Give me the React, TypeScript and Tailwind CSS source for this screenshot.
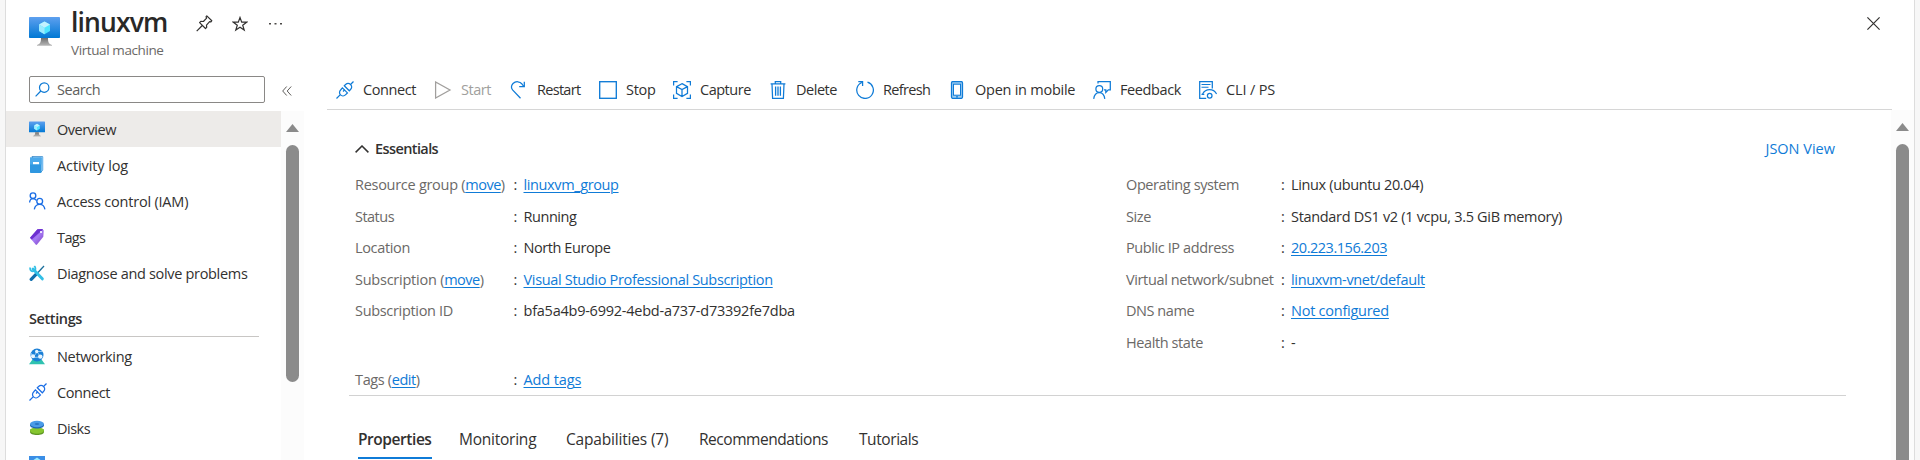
import type { ReactNode } from 'react';

type IconProps = { className?: string };

/* ---------- Icons ---------- */

const VmIcon = ({ className }: IconProps) => (
  <svg viewBox="0 0 31 29" className={className}>
    <defs>
      <linearGradient id="vmScreen" x1="0" y1="0" x2="0" y2="1">
        <stop offset="0" stopColor="#5ea0ef" />
        <stop offset="1" stopColor="#0078d4" />
      </linearGradient>
      <linearGradient id="vmStand" x1="0" y1="0" x2="0" y2="1">
        <stop offset="0" stopColor="#707070" />
        <stop offset="1" stopColor="#b8b8b8" />
      </linearGradient>
    </defs>
    <rect width="31" height="21" rx="0.8" fill="url(#vmScreen)" />
    <path d="M12 21h7c0 4 .8 6 4 7v.8H8V28c3.200-1 4-3 4-7z" fill="url(#vmStand)" />
    <path d="M15.500 4.500l5.500 3v6.500l-5.500 3.200-5.500-3.200V7.500z" fill="#50e6ff" />
    <path d="M15.500 4.500l5.500 3-5.500 3.200-5.500-3.200z" fill="#c3f1ff" />
    <path d="M10 7.500l5.500 3.200v6.500L10 14z" fill="#9cebff" />
  </svg>
);

const PinIcon = () => (
  <svg width="17" height="17" viewBox="0 0 17 17" fill="none" stroke="#323130" strokeWidth="1.200" strokeLinejoin="round">
    <path d="M10.800.9l5 4.800-.7 1.100-1.500-.1-3.100 3.400.2 2.300-1.200 1.100-5.900-5.900L4.800 6.300l2.600.2 3.200-3.300-.5-1.500z" />
    <path d="M6.300 10.500L.7 16.200" />
  </svg>
);

const StarIcon = () => (
  <svg width="16" height="16" viewBox="0 0 16 16" fill="none" stroke="#323130" strokeWidth="1.200">
    <path d="M8 1.500l1.700 4.700h4.900l-3.900 3 1.500 4.900L8 11.200l-4.200 2.900 1.500-4.900-3.900-3h4.900z" />
  </svg>
);

const SearchIcon = () => (
  <svg width="15" height="15" viewBox="0 0 15 15" fill="none" stroke="#0a78d4" strokeWidth="1.200">
    <circle cx="9.200" cy="5.600" r="4.700" />
    <path d="M5.800 9L.6 14.300" />
  </svg>
);

const CollapseIcon = () => (
  <svg width="10" height="10" viewBox="0 0 10 10" fill="none" stroke="#605e5c" strokeWidth="1">
    <path d="M4.700.5L.7 5l4 4.500M9.200.5l-4 4.500 4 4.500" />
  </svg>
);

const BookIcon = () => (
  <svg width="16" height="18" viewBox="0 0 16 18">
    <path d="M3 .6h10.500v13.800L12 16z" fill="#fff" stroke="#1d74bd" strokeWidth=".8" />
    <path d="M12.500 1.500v14l1.800-1.500V.8H3.500z" fill="#76bcf0" />
    <rect x="1" y="1.500" width="11.500" height="15.500" rx=".8" fill="#2f97e0" />
    <path d="M1 1.500h11.500v7H1z" fill="#4ba9eb" />
    <rect x="4" y="6" width="6" height="2.200" fill="#fff" />
  </svg>
);

const PeopleIcon = () => (
  <svg width="17" height="18" viewBox="0 0 17 18" fill="none" stroke="#1b6ee5" strokeWidth="1.350">
    <circle cx="4" cy="3.700" r="2.800" />
    <circle cx="10.700" cy="9.300" r="2.900" />
    <path d="M.6 10.500C.8 8 2 6.600 4 6.600c1.500 0 2.600.7 3.400 1.900M5.300 17.300c.6-3.200 2.600-5 5.400-5s4.700 1.800 5.200 5" />
  </svg>
);

const TagIcon = () => (
  <svg width="16" height="18" viewBox="0 0 16 18">
    <defs>
      <linearGradient id="tagFill" x1="0" y1="0" x2="1" y2="1">
        <stop offset="0" stopColor="#7a35dc" />
        <stop offset="0.500" stopColor="#a67af4" />
        <stop offset="1" stopColor="#7b3fc0" />
      </linearGradient>
    </defs>
    <path d="M8.500 1.300L13.300 1l1.400 1.500-.4 6.200-6.700 8.200-1-.3L1 9.800z" fill="url(#tagFill)" />
    <path d="M8.500 1.300L13.300 1l.6.700L2.600 11.600 1 9.800z" fill="#6d2fd0" />
    <circle cx="12" cy="4" r="1.100" fill="#fff" />
  </svg>
);

const ToolsIcon = () => (
  <svg width="16" height="16" viewBox="0 0 16 16" fill="none">
    <path d="M15 1L8.500 8" stroke="#1b6f9c" strokeWidth="1.300" />
    <path d="M7.500 8.800l-5.300 5.600" stroke="#0f6fae" strokeWidth="3.200" strokeLinecap="round" />
    <path d="M4 4l9.300 9.800" stroke="#32bfe6" strokeWidth="3" strokeLinecap="round" />
    <path d="M1.300 2.400c-.6 2 .3 3.900 2.500 4 2.100 0 3.200-2 2.400-4.200L5.300.9" stroke="#32bfe6" strokeWidth="1.700" />
  </svg>
);

const GlobeIcon = () => (
  <svg width="16" height="17" viewBox="0 0 16 17">
    <path d="M3.500 11.500h9l3.500 4.700H0z" fill="#2fc2b0" />
    <circle cx="8" cy="7" r="6.500" fill="#1b7fd6" />
    <path d="M8 3.700L4.200 9.500 11.600 9zM8 3.700l5-.3M4.200 9.500L2 5" stroke="#9fd0f5" strokeWidth=".9" fill="none" />
    <circle cx="7.700" cy="3.500" r="1.700" fill="#e6f4ff" />
    <circle cx="4" cy="8.300" r="2" fill="#e6f4ff" />
    <circle cx="11.300" cy="8.600" r="2.200" fill="#e6f4ff" />
  </svg>
);

const PlugIcon = ({ color }: { color: string }) => (
  <svg width="18" height="18" viewBox="0 0 18 18" fill="none" stroke={color} strokeWidth="1.250">
    <path d="M.5 17.500l3.600-3.600M17.500.5l-3.200 3.200" />
    <path d="M6.400 6.900l5 5-1.700 1.700c-1.600 1.600-3.800 1.700-5.200.3s-1.300-3.600.3-5.200z" />
    <path d="M8.300 4.800l5 5 1.200-1.300c1.600-1.600 1.500-3.500.1-4.900s-3.400-1.600-5-.1z" />
    <path d="M7 10.500l1.700-1.700" />
  </svg>
);

const DisksIcon = () => (
  <svg width="16" height="16" viewBox="0 0 16 16">
    <path d="M1 9.500v2.300C1 13.900 4 15 8 15s7-1.100 7-3.200V9.500z" fill="#5e9624" />
    <ellipse cx="8" cy="10.500" rx="7" ry="3.200" fill="#86c62f" />
    <path d="M1 4v1.200c0 2 3 3.200 7 3.200s7-1.200 7-3.200V4z" fill="#1f66b5" />
    <ellipse cx="8" cy="4" rx="7" ry="3.200" fill="#4a9be8" />
    <ellipse cx="8" cy="4" rx="2.300" ry=".7" fill="#1f66b5" />
  </svg>
);

const SizeIcon = () => (
  <svg width="16" height="16" viewBox="0 0 16 16">
    <rect width="16" height="11" fill="#3a8ee6" />
    <path d="M8 1.500L11.500 4v4L8 10 4.500 8V4z" fill="#9cebff" />
    <path d="M5.500 15h5l-1-4h-3z" fill="#999" />
  </svg>
);

const Line = ({ children, color = '#0f7bd7' }: { children: ReactNode; color?: string }) => (
  <svg width="18" height="18" viewBox="0 0 18 18" fill="none" stroke={color} strokeWidth="1.250">
    {children}
  </svg>
);

const StartIcon = () => (
  <Line color="#a19f9d">
    <path d="M1.600 1v16L16 9z" />
  </Line>
);
const RestartIcon = () => (
  <Line>
    <path d="M10.500 17.300L2.800 9.200C1.200 7.200 1.300 4.300 3 2.500c3-2.800 7-2 9 .5l1.700 2.500M14.300.7v4.800H9.200" />
  </Line>
);
const StopIcon = () => (
  <Line>
    <rect x=".7" y=".7" width="16.600" height="16.600" strokeWidth="1.350" />
  </Line>
);
const CaptureIcon = () => (
  <Line>
    <path d="M.6 4.500V.6h4M13.400.6h4v3.900M17.400 13.500v3.900h-4M4.600 17.400h-4v-3.900" />
    <path d="M9 2.600l5.500 3v6.700L9 15.500l-5.500-3.200V5.600zM3.500 5.600L9 8.500l5.500-2.900M9 8.500v7" />
  </Line>
);
const DeleteIcon = () => (
  <Line>
    <path d="M1.600 2.900h14.800M6.300 2.500V.6h5.400v1.900M3 3l.6 14.400h10.800L15 3" />
    <path d="M6.600 5.500v9.300M9 5.500v9.300M11.400 5.500v9.300" strokeWidth="1.300" />
  </Line>
);
const RefreshIcon = () => (
  <Line>
    <path d="M11.500 1.200A8.300 8.300 0 1 1 5.800 1.500M2.300.7h4.300V5" />
  </Line>
);
const MobileIcon = () => (
  <Line>
    <rect x="3.500" y=".6" width="11" height="16.800" rx="1.300" fill="#9bcbf0" />
    <rect x="5.500" y="3.200" width="7" height="11" fill="#fff" strokeWidth="1" />
    <path d="M8 15.900h2" strokeWidth="1.200" />
  </Line>
);
const FeedbackIcon = () => (
  <Line>
    <circle cx="6.300" cy="8" r="3.400" />
    <path d="M.7 17.800c.5-3.900 2.600-6.300 5.600-6.300s5 2.400 5.500 6.300M5 2.500V.7h12.300v8.100h-2l-2.500 2.700V8.800H11" />
  </Line>
);
const CliIcon = () => (
  <Line>
    <path d="M7.200 17.400H.7V.6h12.600v6.900" />
    <path d="M2.500 3.500h9M2.500 6.200h7M2.500 13.400h2.800" strokeWidth="1.100" />
    <path d="M3.600 13c1.500-2.800 4-4.300 7-4.300s5.500 1.500 7 4.300" />
    <circle cx="10.700" cy="14.700" r="2.300" />
  </Line>
);

/* ---------- Data ---------- */

const nav = [
  { label: 'Overview', track: 'tracking-[-0.5px]', icon: <VmIcon className="h-[16px] w-[16px]" />, active: true },
  { label: 'Activity log', track: 'tracking-[-0.1px]', icon: <BookIcon /> },
  { label: 'Access control (IAM)', track: 'tracking-[-0.21px]', icon: <PeopleIcon /> },
  { label: 'Tags', track: 'tracking-[-0.6px]', icon: <TagIcon /> },
  { label: 'Diagnose and solve problems', track: 'tracking-[-0.32px]', icon: <ToolsIcon /> },
];

const settings = [
  { label: 'Networking', track: 'tracking-[-0.34px]', icon: <GlobeIcon /> },
  { label: 'Connect', track: 'tracking-[-0.42px]', icon: <PlugIcon color="#1b6ee5" /> },
  { label: 'Disks', track: 'tracking-[-0.5px]', icon: <DisksIcon /> },
  { label: 'Size', track: 'tracking-[-0.4px]', icon: <SizeIcon /> },
];

const commands = [
  { label: 'Connect', width: 'w-[98px]', track: 'tracking-[-0.42px]', icon: <PlugIcon color="#0f7bd7" /> },
  { label: 'Start', width: 'w-[76px]', track: 'tracking-[-0.45px]', icon: <StartIcon />, disabled: true },
  { label: 'Restart', width: 'w-[89px]', track: 'tracking-[-0.7px]', icon: <RestartIcon /> },
  { label: 'Stop', width: 'w-[74px]', track: 'tracking-[-0.3px]', icon: <StopIcon /> },
  { label: 'Capture', width: 'w-[96px]', track: 'tracking-[-0.48px]', icon: <CaptureIcon /> },
  { label: 'Delete', width: 'w-[87px]', track: 'tracking-[-0.48px]', icon: <DeleteIcon /> },
  { label: 'Refresh', width: 'w-[92px]', track: 'tracking-[-0.65px]', icon: <RefreshIcon /> },
  { label: 'Open in mobile', width: 'w-[145px]', track: 'tracking-[-0.25px]', icon: <MobileIcon /> },
  { label: 'Feedback', width: 'w-[106px]', track: 'tracking-[-0.4px]', icon: <FeedbackIcon /> },
  { label: 'CLI / PS', width: 'w-[80px]', track: 'tracking-[-0.15px]', icon: <CliIcon /> },
];

type Field = { label: string; lt: string; action?: string; value: string; vt: string; link?: boolean; height: string };

const leftFields: Field[] = [
  { label: 'Resource group', lt: 'tracking-[-0.28px]', action: 'move', value: 'linuxvm_group', vt: 'tracking-[-0.38px]', link: true, height: 'h-[32px]' },
  { label: 'Status', lt: 'tracking-[-0.52px]', value: 'Running', vt: 'tracking-[-0.44px]', height: 'h-[31px]' },
  { label: 'Location', lt: 'tracking-[-0.34px]', value: 'North Europe', vt: 'tracking-[-0.42px]', height: 'h-[32px]' },
  { label: 'Subscription', lt: 'tracking-[-0.24px]', action: 'move', value: 'Visual Studio Professional Subscription', vt: 'tracking-[-0.33px]', link: true, height: 'h-[31px]' },
  { label: 'Subscription ID', lt: 'tracking-[-0.32px]', value: 'bfa5a4b9-6992-4ebd-a737-d73392fe7dba', vt: 'tracking-[-0.24px]', height: 'h-[32px]' },
];

const rightFields: Field[] = [
  { label: 'Operating system', lt: 'tracking-[-0.4px]', value: 'Linux (ubuntu 20.04)', vt: 'tracking-[-0.36px]', height: 'h-[32px]' },
  { label: 'Size', lt: 'tracking-[-0.4px]', value: 'Standard DS1 v2 (1 vcpu, 3.5 GiB memory)', vt: 'tracking-[-0.32px]', height: 'h-[31px]' },
  { label: 'Public IP address', lt: 'tracking-[-0.4px]', value: '20.223.156.203', vt: 'tracking-[-0.47px]', link: true, height: 'h-[32px]' },
  { label: 'Virtual network/subnet', lt: 'tracking-[-0.37px]', value: 'linuxvm-vnet/default', vt: 'tracking-[-0.33px]', link: true, height: 'h-[31px]' },
  { label: 'DNS name', lt: 'tracking-[-0.45px]', value: 'Not configured', vt: 'tracking-[-0.25px]', link: true, height: 'h-[32px]' },
  { label: 'Health state', lt: 'tracking-[-0.4px]', value: '-', vt: 'tracking-normal', height: 'h-[32px]' },
];

const tabs = [
  { label: 'Properties', width: 'w-[74px]', track: 'tracking-[-0.44px]', active: true },
  { label: 'Monitoring', width: 'w-[80px]', track: 'tracking-[-0.24px]' },
  { label: 'Capabilities (7)', width: 'w-[106px]', track: 'tracking-[-0.18px]' },
  { label: 'Recommendations', width: 'w-[133px]', track: 'tracking-[-0.45px]' },
  { label: 'Tutorials', width: 'w-[62px]', track: 'tracking-[-0.42px]' },
];

/* ---------- Pieces ---------- */

const NavItem = ({ label, icon, track, active }: { label: string; icon: ReactNode; track: string; active?: boolean }) => (
  <li className={`flex h-9 shrink-0 items-center pl-[23px] ${active ? 'bg-[#edebe9]' : ''}`}>
    <span className="flex w-7 items-center">{icon}</span>
    <span className={`pt-px whitespace-nowrap ${track}`}>{label}</span>
  </li>
);

const link = 'text-[#0f7bd7] underline decoration-1 underline-offset-2';

const FieldRow = ({ f, labelWidth }: { f: Field; labelWidth: string }) => (
  <div className={`flex items-center whitespace-nowrap ${f.height}`}>
    <span className={`text-[#6b6967] ${f.lt} ${labelWidth}`}>
      {f.label}
      {f.action && (
        <>
          {' '}(<a className={`${link} tracking-[-0.5px]`}>{f.action}</a>)
        </>
      )}
    </span>
    <span className="w-[10px]">:</span>
    <span className={`${f.vt} ${f.link ? link : ''}`}>{f.value}</span>
  </div>
);

const Scrollbar = ({ thumb, className }: { thumb: string; className: string }) => (
  <div className={`flex shrink-0 flex-col items-center bg-[#fcfcfc] ${className}`}>
    <svg width="13" height="8" viewBox="0 0 13 8" className="shrink-0">
      <path d="M6.500 0L13 8H0z" fill="#8b8b8b" />
    </svg>
    <div className={`mt-[13px] w-[13px] bg-[#8b8b8b] ${thumb}`} />
  </div>
);

/* ---------- Page ---------- */

export default function App() {
  return (
    <div className="h-[460px] w-full overflow-hidden bg-[#f7f7f7] pr-[5px] pl-[5px] font-['Open_Sans',sans-serif] text-[14.5px] leading-5 text-[#323130]">
      <div className="flex h-full flex-col border-x border-[#dddddd] bg-white">
        <header className="flex h-[71px] shrink-0 items-start justify-between pr-[34px] pl-[23px]">
          <div className="flex">
            <VmIcon className="mt-[17px] h-[29px] w-[31px]" />
            <div className="ml-[11px]">
              <div className="flex">
                <h1 className="mt-[5px] w-[125px] text-[26.5px] leading-[34px] font-semibold tracking-[-0.85px] text-[#292827]">linuxvm</h1>
                <div className="mt-[15px] flex h-[17px] items-center">
                  <PinIcon />
                  <span className="ml-[19px]"><StarIcon /></span>
                  <svg width="14" height="2" viewBox="0 0 14 2" className="ml-[21px]" fill="#4a4846">
                    <path d="M0 0h2v1.500H0zM5.500 0h2v1.500h-2zM11 0h2v1.500h-2z" />
                  </svg>
                </div>
              </div>
              <p className="mt-px text-[13.5px] leading-5 tracking-[-0.4px] text-[#6b6967]">Virtual machine</p>
            </div>
          </div>
          <svg width="13" height="13" viewBox="0 0 13 13" className="mt-[17px]" stroke="#323130" strokeWidth="1.200">
            <path d="M.4.400l12.200 12.200M12.600.4L.4 12.600" />
          </svg>
        </header>

        <div className="flex min-h-0 flex-1">
          <aside className="flex w-[298px] shrink-0 flex-col">
            <div className="mt-[5px] mb-2 ml-[23px] flex h-[27px] shrink-0 items-center">
              <div className="flex h-full w-[236px] items-center gap-[7px] rounded-[2px] border border-[#8a8886] pl-[5px] tracking-[-0.45px] text-[#605e5c]">
                <SearchIcon />
                Search
              </div>
              <span className="mt-[2px] ml-[17px]"><CollapseIcon /></span>
            </div>
            <div className="flex min-h-0 flex-1">
              <nav className="flex w-[275px] flex-col overflow-hidden">
                <ul>{nav.map((n) => <NavItem key={n.label} {...n} />)}</ul>
                <h2 className="mt-[18px] mr-[22px] mb-px ml-[23px] flex h-[28px] shrink-0 items-start border-b border-[#c8c6c4] font-semibold tracking-[-0.4px]">Settings</h2>
                <ul>{settings.map((n) => <NavItem key={n.label} {...n} />)}</ul>
              </nav>
              <Scrollbar className="w-[23px] pt-[13px]" thumb="h-[237px] rounded-full" />
            </div>
          </aside>

          <main className="flex min-w-0 flex-1 flex-col">
            <div className="mr-[22px] ml-[23px] flex h-[39px] shrink-0 items-center border-b border-[#d6d6d6] pl-[9px]">
              {commands.map((c) => (
                <div key={c.label} className={`flex items-center gap-[9px] whitespace-nowrap ${c.width} ${c.disabled ? 'text-[#a19f9d]' : ''}`}>
                  {c.icon}
                  <span className={c.track}>{c.label}</span>
                </div>
              ))}
            </div>

            <div className="flex min-h-0 flex-1">
              <div className="min-w-0 flex-1 pr-[45px] pl-[45px]">
                <section className="border-b border-[#d2d2d2] pr-[11px] pb-[2px] pl-[6px]">
                  <div className="flex h-[59px] items-center justify-between pt-[18px]">
                    <div className="flex items-center gap-[6px]">
                      <svg width="14" height="8" viewBox="0 0 14 8" fill="none" stroke="#323130" strokeWidth="1.500">
                        <path d="M.6 7.400L7 1l6.400 6.400" />
                      </svg>
                      <h2 className="font-semibold tracking-[-0.6px]">Essentials</h2>
                    </div>
                    <a className="text-[#0f7bd7]">JSON View</a>
                  </div>
                  <div className="flex h-[198px]">
                    <div className="w-[771px]">
                      {leftFields.map((f) => <FieldRow key={f.label} f={f} labelWidth="w-[158.5px]" />)}
                    </div>
                    <div>
                      {rightFields.map((f) => <FieldRow key={f.label} f={f} labelWidth="w-[155px]" />)}
                    </div>
                  </div>
                  <FieldRow
                    labelWidth="w-[158.5px]"
                    f={{ label: 'Tags', lt: 'tracking-[-0.35px]', action: 'edit', value: 'Add tags', vt: 'tracking-[-0.12px]', link: true, height: 'h-[26px]' }}
                  />
                </section>
                <div className="mt-[30px] flex gap-[27px] pl-[9px] text-[15.5px]">
                  {tabs.map((t) => (
                    <div
                      key={t.label}
                      className={`h-[33px] pt-[3px] whitespace-nowrap ${t.width} ${t.track} ${t.active ? 'border-b-2 border-[#0f7bd7] font-semibold' : ''}`}
                    >
                      {t.label}
                    </div>
                  ))}
                </div>
              </div>
              <Scrollbar className="w-[23px] pt-[13px]" thumb="flex-1 rounded-t-full" />
            </div>
          </main>
        </div>
      </div>
    </div>
  );
}
